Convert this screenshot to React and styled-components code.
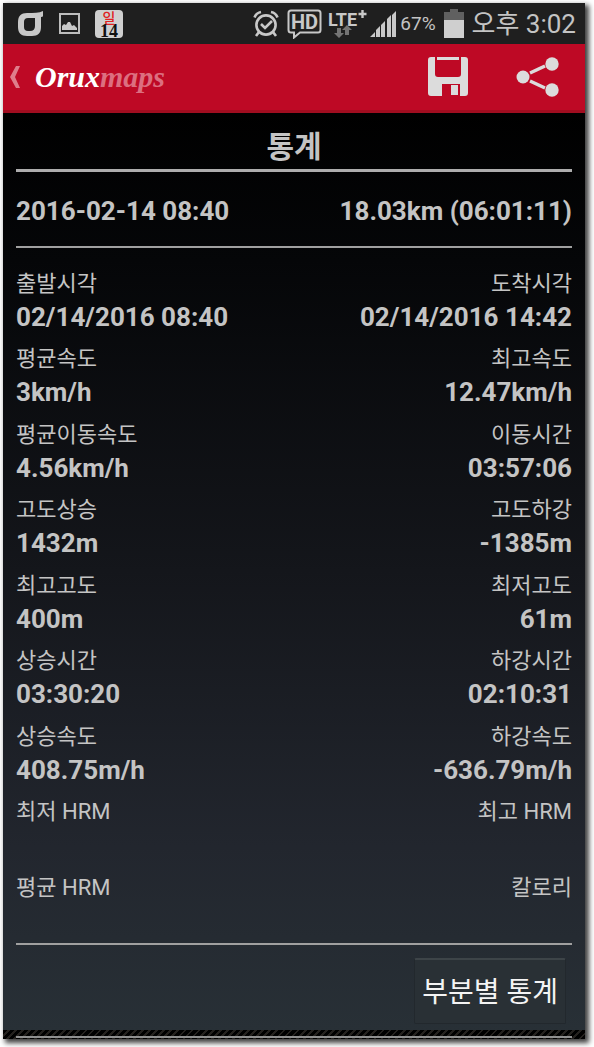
import styled, { createGlobalStyle } from "styled-components";

const GlobalStyle = createGlobalStyle`
  * {
    box-sizing: border-box;
  }

  body {
    margin: 0;
    background: #fff;
    font-family: Roboto, "Noto Sans CJK KR", sans-serif;
    color: #c4c4c4;
  }
`;

const Page = styled.div`
  padding: 3px 9px 9px 3px;
`;

const Screen = styled.div`
  display: flex;
  flex-direction: column;
  background: #000;
  box-shadow: 3px 3px 5px 1px rgba(0, 0, 0, 0.75);
`;

const StatusBar = styled.div`
  display: flex;
  align-items: center;
  justify-content: space-between;
  height: 41px;
  padding: 0 9px 0 15px;
  background: #1f1f1f;
`;

const StatusGroup = styled.div`
  display: flex;
  align-items: center;
  gap: ${(props) => props.$gap}px;
`;

const DateBadge = styled.div`
  display: flex;
  flex-direction: column;
  align-items: center;
  width: 28px;
  height: 28px;
  border-radius: 4px;
  background: #cfcfcf;
  font-family: "Liberation Serif", serif;
  font-size: 18px;
  font-weight: 700;
  line-height: 14px;
  color: #111;
`;

const Weekday = styled.span`
  font-family: "Noto Sans CJK KR", sans-serif;
  font-size: 14px;
  font-weight: 500;
  line-height: 14px;
  color: #e02020;
`;

const Percent = styled.span`
  font-size: 19px;
`;

const Clock = styled.span`
  font-size: 26px;
  line-height: 32px;
  white-space: nowrap;
`;

const Header = styled.header`
  display: flex;
  align-items: center;
  justify-content: space-between;
  height: 69px;
  padding: 0 26px 0 6px;
  border-bottom: 3px solid #a10d20;
  background: #be0925;
`;

const HomeLink = styled.a`
  display: flex;
  align-items: center;
  gap: 14px;
  color: #fff;
  text-decoration: none;
`;

const Brand = styled.span`
  font-family: "Liberation Serif", serif;
  font-size: 30px;
  font-style: italic;
  font-weight: 700;
  line-height: 40px;
`;

const BrandTail = styled.span`
  color: #dc6f80;
`;

const Actions = styled.div`
  display: flex;
  align-items: center;
  gap: 48px;
`;

const IconButton = styled.button`
  display: flex;
  padding: 0;
  border: 0;
  background: none;
  color: #dcdcdc;
  cursor: pointer;
`;

const Content = styled.main`
  padding: 0 13px;
  background: linear-gradient(#000 0%, #050608 16%, #14161b 50%, #22262e 80%, #283036 100%);
`;

const Title = styled.h1`
  margin: 0;
  padding: 18px 0 6px;
  border-bottom: 3px solid #adadad;
  font-size: 30px;
  font-weight: 700;
  line-height: 32px;
  text-align: center;
`;

const Summary = styled.div`
  display: flex;
  justify-content: space-between;
  padding: 23px 0 19px;
  border-bottom: 2px solid #a0a0a0;
  font-size: 26px;
  font-weight: 700;
  line-height: 32px;
`;

const Stats = styled.dl`
  display: grid;
  grid-template-columns: auto auto;
  grid-auto-rows: 1fr;
  justify-content: space-between;
  min-height: 697px;
  margin: 0;
  padding: 16px 0 0;
  border-bottom: 2px solid #a0a0a0;
`;

const Stat = styled.div`
  padding-top: 3px;
  text-align: ${(props) => (props.$end ? "right" : "left")};
`;

const Label = styled.dt`
  font-size: 22px;
  line-height: 34px;
`;

const Value = styled.dd`
  margin: 0;
  font-size: 26px;
  font-weight: 700;
  line-height: 32px;
`;

const Footer = styled.div`
  display: flex;
  justify-content: flex-end;
  padding: 13px 6px 6px;
`;

const SegmentButton = styled.button`
  height: 66px;
  padding: 2px 7px 0;
  border: 1px solid #22282d;
  border-top: 2px solid #3d4448;
  border-radius: 2px;
  background: #293035;
  font-family: inherit;
  font-size: 28px;
  line-height: 32px;
  color: #f4f4f4;
  cursor: pointer;
`;

const BottomEdge = styled.div`
  height: 9px;
  padding: 6px 13px 0;
  background: repeating-linear-gradient(135deg, #000 0 3px, #24211e 3px 5px);
`;

const EdgeLine = styled.div`
  height: 2px;
  background: #909090;
`;

const stats = [
  ["출발시각", "02/14/2016 08:40"],
  ["도착시각", "02/14/2016 14:42"],
  ["평균속도", "3km/h"],
  ["최고속도", "12.47km/h"],
  ["평균이동속도", "4.56km/h"],
  ["이동시간", "03:57:06"],
  ["고도상승", "1432m"],
  ["고도하강", "-1385m"],
  ["최고고도", "400m"],
  ["최저고도", "61m"],
  ["상승시간", "03:30:20"],
  ["하강시간", "02:10:31"],
  ["상승속도", "408.75m/h"],
  ["하강속도", "-636.79m/h"],
  ["최저 HRM", ""],
  ["최고 HRM", ""],
  ["평균 HRM", ""],
  ["칼로리", ""],
];

const CarrierIcon = () => (
  <svg width="26" height="26" viewBox="0 0 26 26">
    <path
      fill="#c8c8c8"
      fillRule="evenodd"
      d="M25 0v5q0 1-2 1v10c0 6-3 9-9 9H9c-6 0-9-3-9-9v-5C0 5 3 2 9 2c7 0 12 0 16-2zM10 7q-4 0-4 4v5q0 4 4 4h2q5 0 5-5V7z"
    />
  </svg>
);

const PictureIcon = () => (
  <svg width="21" height="21" viewBox="0 0 21 21">
    <rect x="1" y="1" width="19" height="19" fill="none" stroke="#bdbdbd" strokeWidth="2" />
    <path d="M3 17v-4l2-2 2 1 2-3h2l2 4 2-1 3 3v2z" fill="#c8c8c8" />
  </svg>
);

const AlarmIcon = () => (
  <svg width="26" height="28" viewBox="0 0 26 28" fill="none" stroke="#c8c8c8" strokeWidth="2.6">
    <circle cx="13" cy="15" r="9.6" />
    <path d="M8 14l4 4 7-7M1.500 7.500Q3 3 8 2M24.500 7.500Q23 3 18 2M6 22l-3 4M20 22l3 4" />
  </svg>
);

const HdIcon = () => (
  <svg width="35" height="30" viewBox="0 0 35 30">
    <path
      d="M4 1.500h27q2.500 0 2.500 2.500v17q0 2.500-2.500 2.500H13l-6 5v-5H4q-2.500 0-2.500-2.500V4q0-2.500 2.500-2.500z"
      fill="none"
      stroke="#c8c8c8"
      strokeWidth="2"
    />
    <text x="17.500" y="19.500" textAnchor="middle" fontFamily="Roboto" fontSize="20" fontWeight="700" fill="#c8c8c8">
      HD
    </text>
  </svg>
);

const LteIcon = () => (
  <svg width="39" height="30" viewBox="0 0 39 30">
    <text x="0" y="17" fontFamily="Roboto" fontSize="18" fontWeight="700" fill="#c8c8c8">
      LTE
    </text>
    <path d="M34.500 1v8M30.500 5h8" stroke="#c8c8c8" strokeWidth="2.4" />
    <path d="M9 19h4v5h3l-5 5-5-5h3zM17 26h4v-5h3l-5-5-5 5h3z" fill="#747474" />
  </svg>
);

const SignalIcon = () => (
  <svg width="27" height="28" viewBox="0 0 27 28" fill="#c8c8c8">
    <path d="M0 27l5-5v5zM6 27v-7l4-4v11zM11 27V15l4-4v16zM17 27V9l4-4v22zM22 27V5l4-4v26z" />
  </svg>
);

const BatteryIcon = () => (
  <svg width="20" height="29" viewBox="0 0 20 29">
    <path d="M6 0h8v3h6v9H0V3h6z" fill="#606060" />
    <path d="M0 11h20v18H0z" fill="#cfcfcf" />
  </svg>
);

const BackIcon = () => (
  <svg width="12" height="24" viewBox="0 0 12 24">
    <path d="M7 1h4L6 12l5 11H7L1 12z" fill="#df7d8b" />
  </svg>
);

const SaveIcon = () => (
  <svg width="40" height="40" viewBox="0 0 40 40" fill="currentColor">
    <path
      fillRule="evenodd"
      d="M3 0h34q3 0 3 3v33q0 3-3 3H3q-3 0-3-3V3q0-3 3-3zM7 0v17q0 3 3 3h20q3 0 3-3V0zM14 27v12h18V27z"
    />
    <path d="M9 0h22v3H9zM23 28h7v10h-7z" />
  </svg>
);

const ShareIcon = () => (
  <svg width="43" height="40" viewBox="0 0 43 40" fill="currentColor">
    <circle cx="7" cy="20" r="6.500" />
    <circle cx="36" cy="7" r="6.700" />
    <circle cx="36" cy="33" r="6.700" />
    <path d="M14 16l15-7M14 24l15 7" stroke="currentColor" strokeWidth="3.500" />
  </svg>
);

const App = () => {
  return (
    <Page>
      <GlobalStyle />
      <Screen>
        <StatusBar>
          <StatusGroup $gap={15}>
            <CarrierIcon />
            <PictureIcon />
            <DateBadge>
              <Weekday>일</Weekday>
              14
            </DateBadge>
          </StatusGroup>
          <StatusGroup $gap={8}>
            <AlarmIcon />
            <StatusGroup $gap={6}>
              <HdIcon />
              <StatusGroup $gap={3}>
                <LteIcon />
                <SignalIcon />
                <Percent>67%</Percent>
              </StatusGroup>
            </StatusGroup>
            <BatteryIcon />
            <Clock>오후 3:02</Clock>
          </StatusGroup>
        </StatusBar>
        <Header>
          <HomeLink href="#">
            <BackIcon />
            <Brand>
              Orux<BrandTail>maps</BrandTail>
            </Brand>
          </HomeLink>
          <Actions>
            <IconButton type="button" aria-label="저장">
              <SaveIcon />
            </IconButton>
            <IconButton type="button" aria-label="공유">
              <ShareIcon />
            </IconButton>
          </Actions>
        </Header>
        <Content>
          <Title>통계</Title>
          <Summary>
            <span>2016-02-14 08:40</span>
            <span>18.03km (06:01:11)</span>
          </Summary>
          <Stats>
            {stats.map(([label, value], index) => (
              <Stat key={label} $end={index % 2 === 1}>
                <Label>{label}</Label>
                <Value>{value}</Value>
              </Stat>
            ))}
          </Stats>
          <Footer>
            <SegmentButton type="button">부분별 통계</SegmentButton>
          </Footer>
        </Content>
        <BottomEdge>
          <EdgeLine />
        </BottomEdge>
      </Screen>
    </Page>
  );
};

export default App;
